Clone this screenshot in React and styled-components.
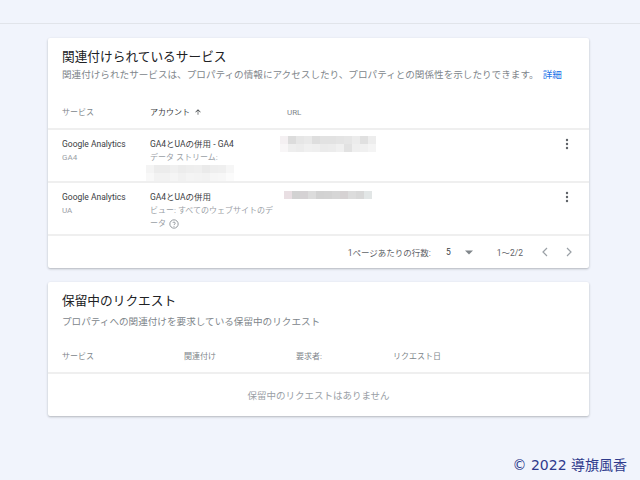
import React from "react";
import styled, { createGlobalStyle } from "styled-components";

const GlobalStyle = createGlobalStyle`
  html, body {
    margin: 0;
    padding: 0;
    background: #f1f4fc;
  }
  body {
    font-family: Roboto, "Noto Sans CJK JP", sans-serif;
    color: #202124;
  }
`;

const Page = styled.div`
  width: 640px;
  height: 480px;
  display: flex;
  flex-direction: column;
  overflow: hidden;
`;

const TopBar = styled.div`
  height: 23px;
  flex-shrink: 0;
  border-bottom: 1px solid #e1e4ea;
`;

const Content = styled.div`
  padding: 14px 51px 0 48px;
  display: flex;
  flex-direction: column;
  gap: 14px;
`;

const Card = styled.section`
  background: #fff;
  box-shadow: 0 1px 2px rgba(60, 64, 67, 0.25), 0 1px 3px rgba(60, 64, 67, 0.1);
  border-radius: 2px;
`;

const CardHead = styled.div`
  padding: 9px 14px 0 14px;
`;

const Title = styled.h2`
  margin: 0 0 ${(p) => p.$gap}px 0;
  font-size: 12.7px;
  font-weight: 400;
  line-height: 20px;
  color: #202124;
`;

const Desc = styled.p`
  margin: 0;
  font-size: 9.6px;
  line-height: 14px;
  color: #80868b;
  white-space: nowrap;
  a {
    color: #1a73e8;
    text-decoration: none;
    margin-left: 4px;
  }
`;

const Row = styled.div`
  display: grid;
  grid-template-columns: ${(p) => p.$cols};
  padding: 0 14px;
  font-size: 8.5px;
  line-height: 13px;
`;

const HeadRow = styled(Row)`
  margin-top: ${(p) => p.$top}px;
  height: 34px;
  box-sizing: border-box;
  align-items: center;
  font-size: 8px;
  color: #80868b;
  border-bottom: 2px solid #efefef;
`;

const BodyRow = styled(Row)`
  height: 53px;
  align-items: start;
  padding-top: 8px;
  box-sizing: border-box;
  border-bottom: 2px solid #efefef;
`;

const Strong = styled.span`
  color: #3c4043;
  display: flex;
  align-items: center;
  gap: 4px;
`;

const Sub = styled.div`
  color: #9aa0a6;
  font-size: 8px;
  line-height: 13px;
`;

const Cell = styled.div`
  display: flex;
  flex-direction: column;
`;

const Kebab = styled.div`
  display: flex;
  justify-content: flex-end;
  padding-right: 6px;
`;

const Footer = styled.div`
  display: flex;
  justify-content: flex-end;
  align-items: center;
  height: 32px;
  padding-right: 17px;
  font-size: 8.5px;
  color: #5f6368;
`;

const PageSize = styled.span`
  display: flex;
  align-items: center;
  gap: 14px;
  margin: 0 24px 0 15px;
  color: #3c4043;
`;

const Nav = styled.span`
  display: flex;
  gap: 18px;
  margin-left: 19px;
`;

const Empty = styled.div`
  height: 42px;
  display: flex;
  align-items: center;
  justify-content: center;
  font-size: 9.5px;
  color: #9aa0a6;
`;

const Copyright = styled.div`
  margin-top: auto;
  padding: 0 13px 6px 0;
  text-align: right;
  font-family: "DejaVu Sans", "Noto Sans CJK JP", sans-serif;
  font-size: 14px;
  color: #2e3a8c;
`;

const Blur = ({ w, rows, tones }) => (
  <svg width={w} height={rows * 8} style={{ display: "block" }}>
    {tones.map((row, r) =>
      row.map((t, c) => (
        <rect key={r + "-" + c} x={c * 8} y={r * 8} width="8" height="8" fill={t} />
      ))
    )}
  </svg>
);

const urlTones1 = [
  ["#f4f0f2", "#dcdcdc", "#e6e6e6", "#e9e9e9", "#dedede", "#e2e2e2", "#e2e2e2", "#e4e4e4", "#e6e6e6", "#ececec", "#e0e0e0", "#ededed"],
  ["#f8f6f7", "#eeeeee", "#ececec", "#f0f0f0", "#efefef", "#ebebeb", "#ececec", "#f0f0f0", "#e2e2e2", "#efefef", "#f0f0f0", "#f4f4f4"],
];
const acctTones = [
  ["#f4f4f4", "#ececec", "#ececec", "#f0f0f0", "#ececec", "#eeeeee", "#efefef", "#eaeaea", "#eeeeee", "#efefef", "#f6f6f6"],
  ["#f8f8f8", "#f2f2f2", "#f2f2f2", "#f5f5f5", "#f1f1f1", "#f4f4f4", "#f3f3f3", "#f2f2f2", "#f6f6f6", "#f7f7f7", "#fbfbfb"],
];
const urlTones2 = [
  ["#e9dfe3", "#d2d2d2", "#d5d2d4", "#dcdcdc", "#d2d2d2", "#d3d3d3", "#d6d6d6", "#d6d2d3", "#dcdcdc", "#d8d8d8", "#e2e6e6"],
];

const More = () => (
  <svg width="4" height="12" viewBox="0 0 4 12">
    <circle cx="2" cy="2" r="1.2" fill="#5f6368" />
    <circle cx="2" cy="6" r="1.2" fill="#5f6368" />
    <circle cx="2" cy="10" r="1.2" fill="#5f6368" />
  </svg>
);

const Help = () => (
  <svg width="10" height="10" viewBox="0 0 24 24">
    <circle cx="12" cy="12" r="10" fill="none" stroke="#80868b" strokeWidth="2" />
    <path d="M9.2 9.2a2.9 2.9 0 0 1 5.6 1c0 2-2.8 2.4-2.8 4.2" fill="none" stroke="#80868b" strokeWidth="2" />
    <circle cx="12" cy="17.6" r="1.2" fill="#80868b" />
  </svg>
);

const Chevron = ({ dir }) => (
  <svg width="6" height="10" viewBox="0 0 6 10">
    <path
      d={dir === "left" ? "M5 1L1 5l4 4" : "M1 1l4 4-4 4"}
      fill="none"
      stroke="#9aa0a6"
      strokeWidth="1.2"
    />
  </svg>
);

const linkedCols = "88px 137px 1fr 20px";
const pendingCols = "122px 112px 97px 1fr";

export default function App() {
  return (
    <Page>
      <GlobalStyle />
      <TopBar />
      <Content>
        <Card>
          <CardHead>
            <Title $gap={1}>関連付けられているサービス</Title>
            <Desc>
              関連付けられたサービスは、プロパティの情報にアクセスしたり、プロパティとの関係性を示したりできます。
              <a href="#">詳細</a>
            </Desc>
          </CardHead>
          <HeadRow $cols={linkedCols} $top={14}>
            <span>サービス</span>
            <Strong>
              アカウント
              <svg width="8" height="8" viewBox="0 0 24 24">
                <path d="M4 12l1.4 1.4L11 7.8V20h2V7.8l5.6 5.6L20 12l-8-8z" fill="#3c4043" />
              </svg>
            </Strong>
            <span>URL</span>
            <span />
          </HeadRow>
          <BodyRow $cols={linkedCols}>
            <Cell>
              <Strong>Google Analytics</Strong>
              <Sub>GA4</Sub>
            </Cell>
            <Cell>
              <Strong>GA4とUAの併用 - GA4</Strong>
              <Sub>データ ストリーム:</Sub>
              <div style={{ marginLeft: -4, marginTop: 1 }}>
                <Blur w={88} rows={2} tones={acctTones} />
              </div>
            </Cell>
            <Cell style={{ marginLeft: -7, marginTop: -2 }}>
              <Blur w={96} rows={2} tones={urlTones1} />
            </Cell>
            <Kebab>
              <More />
            </Kebab>
          </BodyRow>
          <BodyRow $cols={linkedCols}>
            <Cell>
              <Strong>Google Analytics</Strong>
              <Sub>UA</Sub>
            </Cell>
            <Cell>
              <Strong>GA4とUAの併用</Strong>
              <Sub>ビュー: すべてのウェブサイトのデ</Sub>
              <Sub style={{ display: "flex", alignItems: "center", gap: 3 }}>
                ータ <Help />
              </Sub>
            </Cell>
            <Cell style={{ marginLeft: -3 }}>
              <Blur w={88} rows={1} tones={urlTones2} />
            </Cell>
            <Kebab>
              <More />
            </Kebab>
          </BodyRow>
          <Footer>
            <span>1ページあたりの行数:</span>
            <PageSize>
              5
              <svg width="8" height="5" viewBox="0 0 10 5">
                <path d="M0 0l5 5 5-5z" fill="#80868b" />
              </svg>
            </PageSize>
            <span>1～2/2</span>
            <Nav>
              <Chevron dir="left" />
              <Chevron dir="right" />
            </Nav>
          </Footer>
        </Card>

        <Card>
          <CardHead>
            <Title $gap={4}>保留中のリクエスト</Title>
            <Desc>プロパティへの関連付けを要求している保留中のリクエスト</Desc>
          </CardHead>
          <HeadRow $cols={pendingCols} $top={11}>
            <span>サービス</span>
            <span>関連付け</span>
            <span>要求者:</span>
            <span>リクエスト日</span>
          </HeadRow>
          <Empty>保留中のリクエストはありません</Empty>
        </Card>
      </Content>
      <Copyright>© 2022 導旗風香</Copyright>
    </Page>
  );
}
